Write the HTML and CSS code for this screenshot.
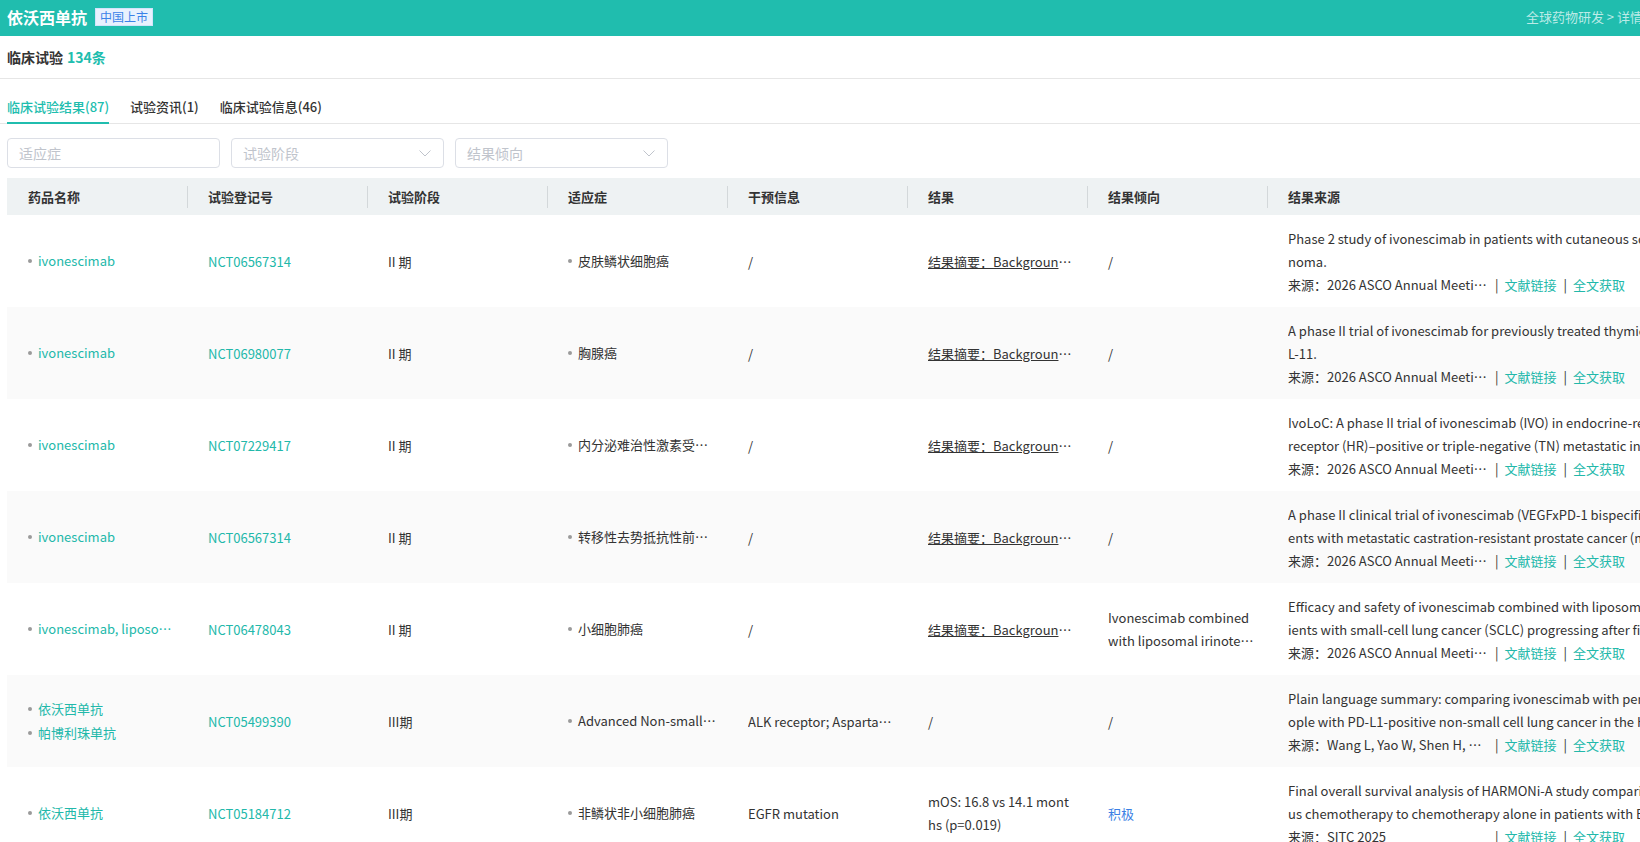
FILE: index.html
```html
<!DOCTYPE html>
<html lang="zh-CN">
<head>
    <meta charset="UTF-8">
    <meta name="viewport" content="width=device-width, initial-scale=1.0">
    <title>依沃西单抗 - 临床试验</title>
    <link rel="stylesheet" href="styles.css">
</head>
<body>
<div class="page">
    <div class="topbar">
        <div class="topbar-left">
            <span class="drug-title">依沃西单抗</span>
            <span class="status-tag">中国上市</span>
        </div>
        <div class="crumb">全球药物研发 &gt; 详情</div>
    </div>

    <div class="section-head">临床试验 <span class="count">134条</span></div>

    <div class="tabs">
        <a href="#" class="tab active">临床试验结果(87)</a>
        <a href="#" class="tab">试验资讯(1)</a>
        <a href="#" class="tab">临床试验信息(46)</a>
    </div>

    <div class="filters">
        <div class="filter">适应症</div>
        <div class="filter">试验阶段
            <svg class="chevron" width="12" height="7" viewBox="0 0 12 7"><polyline points="0.5,0.5 6,6 11.5,0.5" fill="none" stroke="#c0c4cc" stroke-width="1"/></svg>
        </div>
        <div class="filter">结果倾向
            <svg class="chevron" width="12" height="7" viewBox="0 0 12 7"><polyline points="0.5,0.5 6,6 11.5,0.5" fill="none" stroke="#c0c4cc" stroke-width="1"/></svg>
        </div>
    </div>

    <div class="table-wrap">
        <table class="trial-table">
            <colgroup>
                <col class="col"><col class="col"><col class="col"><col class="col">
                <col class="col"><col class="col"><col class="col"><col class="col-source">
            </colgroup>
            <thead>
                <tr>
                    <th>药品名称</th>
                    <th>试验登记号</th>
                    <th>试验阶段</th>
                    <th>适应症</th>
                    <th>干预信息</th>
                    <th>结果</th>
                    <th>结果倾向</th>
                    <th>结果来源</th>
                </tr>
            </thead>
            <tbody>
                <tr>
                    <td><div class="dot-item link">ivonescimab</div></td>
                    <td><a href="#" class="link">NCT06567314</a></td>
                    <td>II 期</td>
                    <td><div class="dot-item">皮肤鳞状细胞癌</div></td>
                    <td>/</td>
                    <td><a href="#" class="summary">结果摘要：Background: Cutaneous squamous cell carcinoma</a></td>
                    <td>/</td>
                    <td>
                        <div class="src-title">Phase 2 study of ivonescimab in patients with cutaneous squamous cell carcinoma.</div>
                        <div class="src-line"><span class="src-name">来源：2026 ASCO Annual Meeting</span><span class="sep">|</span><a href="#" class="link">文献链接</a><span class="sep">|</span><a href="#" class="link">全文获取</a></div>
                    </td>
                </tr>
                <tr>
                    <td><div class="dot-item link">ivonescimab</div></td>
                    <td><a href="#" class="link">NCT06980077</a></td>
                    <td>II 期</td>
                    <td><div class="dot-item">胸腺癌</div></td>
                    <td>/</td>
                    <td><a href="#" class="summary">结果摘要：Background: Thymic carcinoma</a></td>
                    <td>/</td>
                    <td>
                        <div class="src-title">A phase II trial of ivonescimab for previously treated thymic tumor: AK112-IIT-L-11.</div>
                        <div class="src-line"><span class="src-name">来源：2026 ASCO Annual Meeting</span><span class="sep">|</span><a href="#" class="link">文献链接</a><span class="sep">|</span><a href="#" class="link">全文获取</a></div>
                    </td>
                </tr>
                <tr>
                    <td><div class="dot-item link">ivonescimab</div></td>
                    <td><a href="#" class="link">NCT07229417</a></td>
                    <td>II 期</td>
                    <td><div class="dot-item">内分泌难治性激素受体阳性乳腺癌</div></td>
                    <td>/</td>
                    <td><a href="#" class="summary">结果摘要：Background: Inflammatory breast cancer</a></td>
                    <td>/</td>
                    <td>
                        <div class="src-title">IvoLoC: A phase II trial of ivonescimab (IVO) in endocrine-refractory hormone receptor (HR)–positive or triple-negative (TN) metastatic inflammatory breast cancer.</div>
                        <div class="src-line"><span class="src-name">来源：2026 ASCO Annual Meeting</span><span class="sep">|</span><a href="#" class="link">文献链接</a><span class="sep">|</span><a href="#" class="link">全文获取</a></div>
                    </td>
                </tr>
                <tr>
                    <td><div class="dot-item link">ivonescimab</div></td>
                    <td><a href="#" class="link">NCT06567314</a></td>
                    <td>II 期</td>
                    <td><div class="dot-item">转移性去势抵抗性前列腺癌</div></td>
                    <td>/</td>
                    <td><a href="#" class="summary">结果摘要：Background: Metastatic castration-resistant prostate cancer</a></td>
                    <td>/</td>
                    <td>
                        <div class="src-title">A phase II clinical trial of ivonescimab (VEGFxPD-1 bispecific antibody) in patients with metastatic castration-resistant prostate cancer (mCRPC).</div>
                        <div class="src-line"><span class="src-name">来源：2026 ASCO Annual Meeting</span><span class="sep">|</span><a href="#" class="link">文献链接</a><span class="sep">|</span><a href="#" class="link">全文获取</a></div>
                    </td>
                </tr>
                <tr>
                    <td><div class="dot-item link">ivonescimab, liposomal irinotecan</div></td>
                    <td><a href="#" class="link">NCT06478043</a></td>
                    <td>II 期</td>
                    <td><div class="dot-item">小细胞肺癌</div></td>
                    <td>/</td>
                    <td><a href="#" class="summary">结果摘要：Background: Small-cell lung cancer</a></td>
                    <td>
                        <div class="line">Ivonescimab combined</div>
                        <div class="line ellipsis">with liposomal irinotecan showed promising efficacy</div>
                    </td>
                    <td>
                        <div class="src-title">Efficacy and safety of ivonescimab combined with liposomal irinotecan in patients with small-cell lung cancer (SCLC) progressing after first-line therapy.</div>
                        <div class="src-line"><span class="src-name">来源：2026 ASCO Annual Meeting</span><span class="sep">|</span><a href="#" class="link">文献链接</a><span class="sep">|</span><a href="#" class="link">全文获取</a></div>
                    </td>
                </tr>
                <tr>
                    <td>
                        <div class="dot-item link">依沃西单抗</div>
                        <div class="dot-item link">帕博利珠单抗</div>
                    </td>
                    <td><a href="#" class="link">NCT05499390</a></td>
                    <td>III期</td>
                    <td><div class="dot-item">Advanced Non-small Cell Lung Cancer</div></td>
                    <td><div class="ellipsis">ALK receptor; Aspartate kinase; EGFR</div></td>
                    <td>/</td>
                    <td>/</td>
                    <td>
                        <div class="src-title">Plain language summary: comparing ivonescimab with pembrolizumab in people with PD-L1-positive non-small cell lung cancer in the HARMONi-2 study.</div>
                        <div class="src-line"><span class="src-name">来源：Wang L, Yao W, Shen H, et al.</span><span class="sep">|</span><a href="#" class="link">文献链接</a><span class="sep">|</span><a href="#" class="link">全文获取</a></div>
                    </td>
                </tr>
                <tr>
                    <td><div class="dot-item link">依沃西单抗</div></td>
                    <td><a href="#" class="link">NCT05184712</a></td>
                    <td>III期</td>
                    <td><div class="dot-item">非鳞状非小细胞肺癌</div></td>
                    <td><div class="ellipsis">EGFR mutation</div></td>
                    <td><div class="clamp">mOS: 16.8 vs 14.1 months (p=0.019)</div></td>
                    <td><span class="positive">积极</span></td>
                    <td>
                        <div class="src-title">Final overall survival analysis of HARMONi-A study comparing ivonescimab plus chemotherapy to chemotherapy alone in patients with EGFR-mutated NSCLC.</div>
                        <div class="src-line"><span class="src-name">来源：SITC 2025</span><span class="sep">|</span><a href="#" class="link">文献链接</a><span class="sep">|</span><a href="#" class="link">全文获取</a></div>
                    </td>
                </tr>
            </tbody>
        </table>
    </div>
</div>
</body>
</html>
```

FILE: styles.css
```css
* {
    box-sizing: border-box;
}

body {
    margin: 0;
    font-family: "Noto Sans CJK SC", "Noto Sans", sans-serif;
    font-size: 13px;
    color: #333;
    background: #fff;
    overflow: hidden;
}

a {
    text-decoration: none;
}

.page {
    width: 1650px;
    overflow: hidden;
}

/* top bar */
.topbar {
    height: 36px;
    background: #20bdae;
    display: flex;
    align-items: center;
    justify-content: space-between;
    padding: 0 7px;
}

.topbar-left {
    display: flex;
    align-items: center;
}

.drug-title {
    color: #fff;
    font-size: 16px;
    font-weight: bold;
    line-height: 20px;
    margin-top: -3px;
}

.status-tag {
    margin-left: 8px;
    margin-top: -3px;
    padding: 0 4px;
    font-size: 12px;
    line-height: 16px;
    color: #3b82e8;
    background: #e8f1fe;
    border: 1px solid #d2e3fb;
}

.crumb {
    color: #bcebe7;
    font-size: 13px;
    margin-top: -3px;
}

/* section */
.section-head {
    height: 43px;
    padding: 0 7px;
    display: flex;
    align-items: center;
    gap: 4px;
    font-size: 14px;
    font-weight: bold;
    border-bottom: 1px solid #e6e6e6;
}

.count {
    color: #20bdae;
}

.tabs {
    display: flex;
    gap: 21px;
    padding: 0 7px;
    border-bottom: 1px solid #e6e6e6;
}

.tab {
    padding: 18px 0 5px;
    line-height: 20px;
    font-size: 13px;
    font-weight: 500;
    color: #333;
    border-bottom: 2px solid transparent;
    margin-bottom: -1px;
}

.tab.active {
    color: #20bdae;
    border-bottom-color: #20bdae;
}

/* filters */
.filters {
    display: flex;
    gap: 11px;
    padding: 0 7px;
    margin-top: 14px;
}

.filter {
    width: 213px;
    height: 30px;
    border: 1px solid #dcdfe6;
    border-radius: 4px;
    padding: 0 12px 0 11px;
    display: flex;
    align-items: center;
    justify-content: space-between;
    font-size: 14px;
    color: #c0c4cc;
}

/* table */
.table-wrap {
    margin-top: 10px;
    padding-left: 7px;
}

.trial-table {
    border-collapse: collapse;
    table-layout: fixed;
    width: 1762px;
}

.col {
    width: 180px;
}

.col-source {
    width: 502px;
}

.trial-table th {
    position: relative;
    height: 37px;
    padding: 0 13px 0 21px;
    background: #eef2f3;
    text-align: left;
    font-size: 13px;
    font-weight: bold;
    color: #333;
}

.trial-table th + th::before {
    content: "";
    position: absolute;
    left: 0;
    top: 8px;
    width: 1px;
    height: 22px;
    background: #d3d8da;
}

.trial-table td {
    height: 92px;
    padding: 0 13px 0 21px;
    vertical-align: middle;
    line-height: 23px;
    color: #333;
    white-space: nowrap;
    overflow: hidden;
    text-overflow: ellipsis;
}

.trial-table tbody tr:nth-child(even) {
    background: #fafafa;
}

.link {
    color: #22b8aa;
}

.dot-item {
    position: relative;
    padding-left: 10px;
    margin-right: -3px;
    line-height: 24px;
    white-space: nowrap;
    overflow: hidden;
    text-overflow: ellipsis;
}

.dot-item::before {
    content: "";
    position: absolute;
    left: 0;
    top: 10px;
    width: 4px;
    height: 4px;
    border-radius: 50%;
    background: #9a9a9a;
}

.summary {
    color: #333;
    text-decoration: underline;
}

.ellipsis {
    overflow: hidden;
    text-overflow: ellipsis;
}

.line {
    white-space: nowrap;
}

.clamp {
    white-space: normal;
    word-break: break-all;
    display: -webkit-box;
    -webkit-line-clamp: 2;
    -webkit-box-orient: vertical;
    overflow: hidden;
}

.positive {
    color: #3b7fe4;
}

.src-title {
    white-space: normal;
    word-break: break-all;
    display: -webkit-box;
    -webkit-line-clamp: 2;
    -webkit-box-orient: vertical;
    overflow: hidden;
}

.src-line {
    display: flex;
    align-items: center;
}

.src-name {
    flex: 0 0 200px;
    overflow: hidden;
    white-space: nowrap;
    text-overflow: ellipsis;
}

.sep {
    margin: 0 6px 0 7px;
    color: #333;
}
```
